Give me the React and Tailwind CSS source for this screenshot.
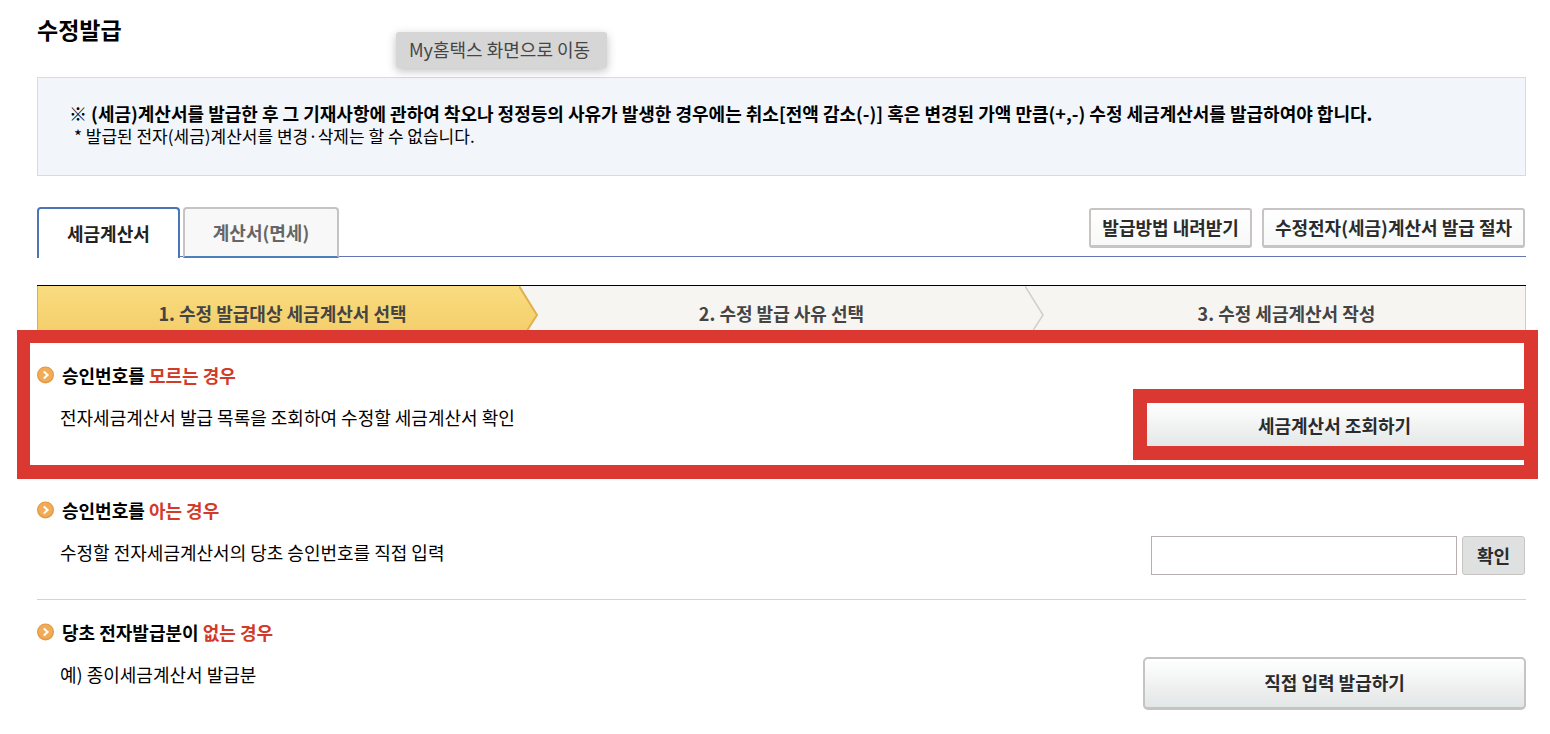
import React, { useState } from 'react'

const TABS = ['세금계산서', '계산서(면세)']

export default function App() {
  const [tab, setTab] = useState(0)
  const [approvalNo, setApprovalNo] = useState('')

  return (
    <main className="relative bg-white pl-[37px] pr-6 pt-[13px] pb-6 text-[18px] leading-6 text-black font-['Noto_Sans_CJK_KR',sans-serif]">
      <h1 className="text-[23px] leading-8 font-bold">수정발급</h1>

      {/* Hover tooltip */}
      <div role="tooltip" className="absolute left-[396px] top-8 flex h-9 items-center rounded-[3px] bg-[#d5d6d5] pl-[13px] pr-[17px] pb-[2px] text-[#454545] shadow-[0_3px_10px_rgba(0,0,0,0.25)]">
        My홈택스 화면으로 이동
      </div>

      <section className="mt-8 border border-[#d5dde2] bg-[#f2f6fb] pt-[23px] pb-7 pl-[31px] pr-6">
        <p className="font-bold">
          ※ (세금)계산서를 발급한 후 그 기재사항에 관하여 착오나 정정등의 사유가 발생한 경우에는 취소[전액 감소(-)] 혹은 변경된 가액 만큼(+,-) 수정 세금계산서를 발급하여야 합니다.
        </p>
        <p className="pl-[5px] text-[17px] leading-[22px]">* 발급된 전자(세금)계산서를 변경·삭제는 할 수 없습니다.</p>
      </section>

      <div className="mt-[31px] flex items-start justify-between border-b border-[#6474b4]">
        <div role="tablist" className="-mb-[2px] flex gap-[3px]">
          {TABS.map((name, i) => (
            <button
              key={name}
              role="tab"
              aria-selected={tab === i}
              onClick={() => setTab(i)}
              className={`h-[51px] rounded-t-[4px] border-2 px-7 pb-[2px] font-bold
                ${tab === i
                  ? 'border-[#4a76b5] border-b-0 bg-white text-[#222]'
                  : 'border-[#c6c3c3] border-b-[#4a7fc0] bg-[#f8f8f8] text-[#666]'}`}>
              {name}
            </button>
          ))}
        </div>
        <div className="mt-px flex gap-[10px] pr-px">
          <SmallButton>발급방법 내려받기</SmallButton>
          <SmallButton>수정전자(세금)계산서 발급 절차</SmallButton>
        </div>
      </div>

      <ol className="mt-7 grid h-[58px] grid-cols-[482fr_19px_487fr_19px_482fr] border-t border-black bg-[#f6f5f1] font-bold text-[#444]">
        <li className="flex items-center justify-center border-l border-b border-[#dcb04c] bg-linear-to-b from-[#f9dc80] to-[#f3cb66] pl-2 pb-[2px]">
          1. 수정 발급대상 세금계산서 선택
        </li>
        <li aria-hidden="true"><StepArrow active /></li>
        <li className="flex items-center justify-center pb-[3px]">2. 수정 발급 사유 선택</li>
        <li aria-hidden="true"><StepArrow /></li>
        <li className="flex items-center justify-center border-r border-[#cfcac6] pl-1 pb-[3px]">3. 수정 세금계산서 작성</li>
      </ol>

      <section className="relative flex justify-between pb-[25px]">
        <CaseText title="승인번호를" point="모르는 경우">
          전자세금계산서 발급 목록을 조회하여 수정할 세금계산서 확인
        </CaseText>
        <div className="relative mt-[57px]">
          <WideButton>세금계산서 조회하기</WideButton>
          <div className="pointer-events-none absolute -left-[10px] -right-3 -top-[11px] -bottom-[7px] border-14 border-[#dc3832]" />
        </div>
        {/* Highlight around the whole case */}
        <div className="pointer-events-none absolute -left-5 -right-3 -top-[13px] -bottom-px border-[13px] border-r-14 border-b-14 border-[#dc3832]" />
      </section>

      <section className="flex justify-between border-b border-[#d3d3d3] pb-6">
        <CaseText title="승인번호를" point="아는 경우">
          수정할 전자세금계산서의 당초 승인번호를 직접 입력
        </CaseText>
        <form className="mt-[58px] flex gap-[5px] pr-px" onSubmit={e => e.preventDefault()}>
          <input
            aria-label="승인번호"
            value={approvalNo}
            onChange={e => setApprovalNo(e.target.value)}
            className="h-[39px] w-[306px] border border-[#b9adad] bg-white px-2"
          />
          <button type="submit" className="h-[39px] rounded-[3px] border border-[#c9c4c4] bg-[#dfe0e0] px-[14px] pb-[2px] font-bold text-[#2b2b2b]">
            확인
          </button>
        </form>
      </section>

      <section className="flex justify-between">
        <CaseText title="당초 전자발급분이" point="없는 경우">예) 종이세금계산서 발급분</CaseText>
        <div className="mt-[57px]">
          <WideButton>직접 입력 발급하기</WideButton>
        </div>
      </section>
    </main>
  )
}

function CaseText({ title, point, children }) {
  return (
    <div className="pt-5">
      <h2 className="flex items-center gap-2 font-bold">
        <Bullet />
        <span>{title} <span className="text-[#d23a2a]">{point}</span></span>
      </h2>
      <p className="mt-[18px] pl-[23px]">{children}</p>
    </div>
  )
}

function Bullet() {
  return (
    <svg width="17" height="18" viewBox="0 0 17 18" aria-hidden="true">
      <circle cx="8.5" cy="9" r="8.5" fill="#e39a45" />
      <circle cx="8.5" cy="8.6" r="7.2" fill="#f2ac58" />
      <path d="M6.8 5.4 L10.6 9 L6.8 12.6" fill="none" stroke="#fff" strokeWidth="2" />
    </svg>
  )
}

function StepArrow({ active }) {
  return (
    <svg className="h-full w-full" viewBox="0 0 19 57" preserveAspectRatio="none" aria-hidden="true">
      {active && (
        <>
          <linearGradient id="step" x1="0" y1="0" x2="0" y2="1">
            <stop offset="0" stopColor="#f9dc80" />
            <stop offset="1" stopColor="#f3cb66" />
          </linearGradient>
          <path d="M0 0 L18 29 L0 57 Z" fill="url(#step)" />
        </>
      )}
      <path d="M0 0 L18 29 L0 57" fill="none" stroke={active ? '#e0b04f' : '#d2cfca'} strokeWidth={active ? 2 : 1.5} />
    </svg>
  )
}

const SmallButton = ({ children }) => (
  <button className="h-10 rounded-[3px] border-2 border-b-[3px] border-[#c8c4c3] bg-linear-to-b from-white to-[#f7f8f8] px-[11px] pb-[2px] font-bold text-[#2b2b2b]">
    {children}
  </button>
)

const WideButton = ({ children }) => (
  <button className="block h-[53px] w-[383px] rounded-[5px] border-2 border-b-[3px] border-[#c6c4c3] bg-linear-to-b from-white to-[#e3e6e6] pb-[2px] font-bold text-[#2b2b2b]">
    {children}
  </button>
)
